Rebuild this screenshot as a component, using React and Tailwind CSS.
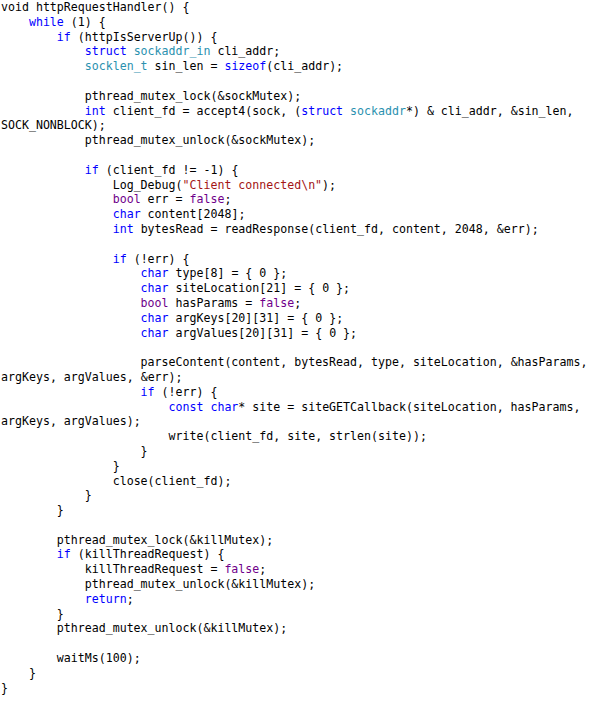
const code = `void httpRequestHandler() {
    while (1) {
        if (httpIsServerUp()) {
            struct sockaddr_in cli_addr;
            socklen_t sin_len = sizeof(cli_addr);

            pthread_mutex_lock(&sockMutex);
            int client_fd = accept4(sock, (struct sockaddr*) & cli_addr, &sin_len,
SOCK_NONBLOCK);
            pthread_mutex_unlock(&sockMutex);

            if (client_fd != -1) {
                Log_Debug("Client connected\\n");
                bool err = false;
                char content[2048];
                int bytesRead = readResponse(client_fd, content, 2048, &err);

                if (!err) {
                    char type[8] = { 0 };
                    char siteLocation[21] = { 0 };
                    bool hasParams = false;
                    char argKeys[20][31] = { 0 };
                    char argValues[20][31] = { 0 };

                    parseContent(content, bytesRead, type, siteLocation, &hasParams,
argKeys, argValues, &err);
                    if (!err) {
                        const char* site = siteGETCallback(siteLocation, hasParams,
argKeys, argValues);
                        write(client_fd, site, strlen(site));
                    }
                }
                close(client_fd);
            }
        }

        pthread_mutex_lock(&killMutex);
        if (killThreadRequest) {
            killThreadRequest = false;
            pthread_mutex_unlock(&killMutex);
            return;
        }
        pthread_mutex_unlock(&killMutex);

        waitMs(100);
    }
}`;

const keywords = new Set(['while', 'if', 'struct', 'sizeof', 'int', 'char', 'const', 'return']);
const macros = new Set(['bool', 'false']);
const types = new Set(['sockaddr_in', 'socklen_t', 'sockaddr']);

const tokenize = (line) => line.match(/"(?:[^"\\]|\\.)*"|[A-Za-z_][A-Za-z0-9_]*|\s+|./g) || [];

const colorFor = (token) => {
  if (token.startsWith('"')) return 'text-[#a31515]';
  if (keywords.has(token)) return 'text-[#0000ff]';
  if (macros.has(token)) return 'text-[#6f008a]';
  if (types.has(token)) return 'text-[#2b91af]';
  return '';
};

export default function App() {
  const lines = code.split('\n');

  return (
    <div className="min-h-[714px] w-[606px] bg-white pl-px font-['DejaVu_Sans_Mono',monospace] text-[11.6px] leading-[14.8px] text-black">
      {lines.map((line, index) => (
        <div key={index} className="h-[14.8px] whitespace-pre">
          {tokenize(line).map((token, i) => {
            const cls = colorFor(token);
            return cls ? (
              <span key={i} className={cls}>
                {token}
              </span>
            ) : (
              token
            );
          })}
        </div>
      ))}
    </div>
  );
}
